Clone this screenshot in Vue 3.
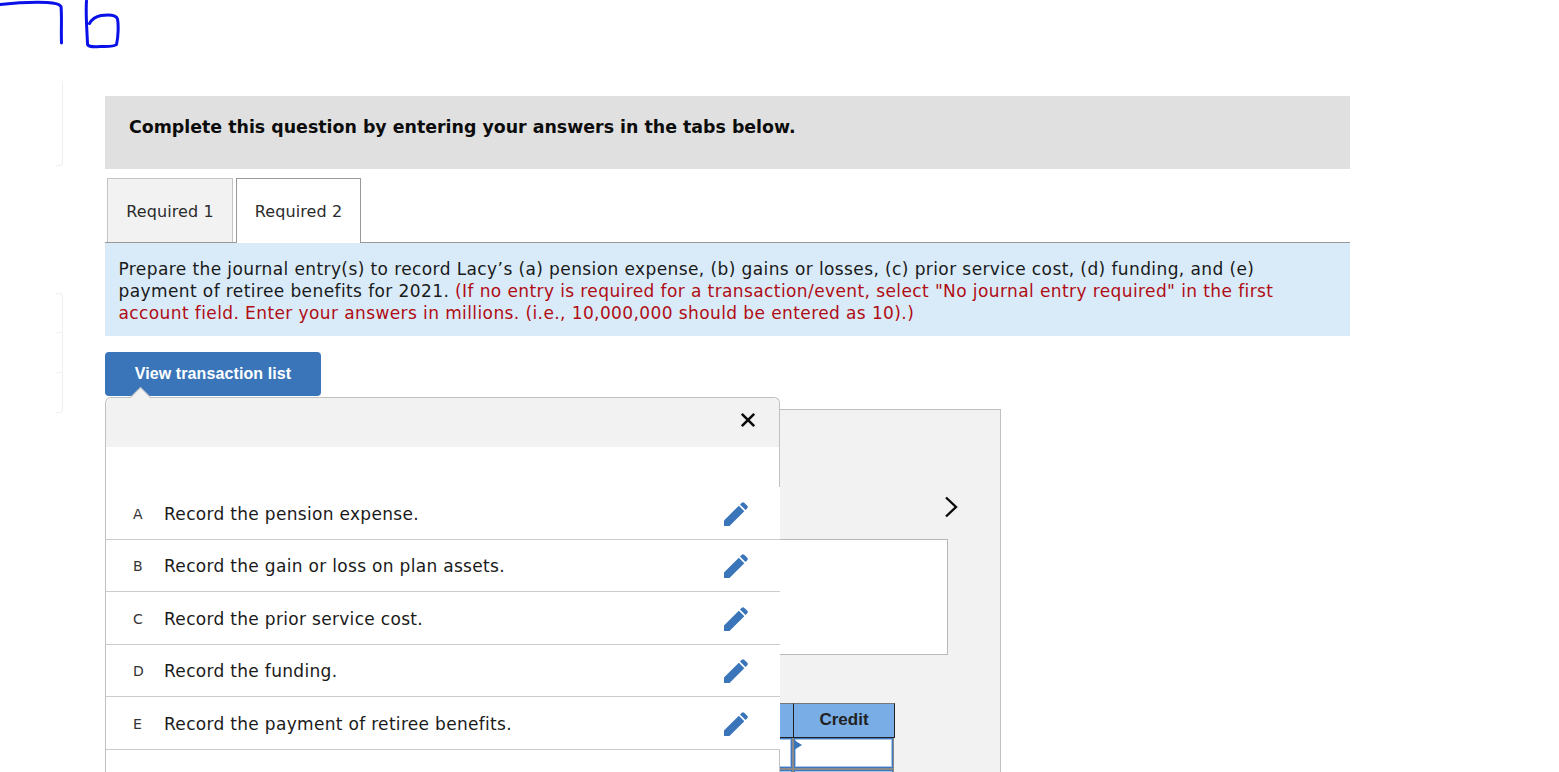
<script setup>
const rows = [
  { key: 'A', text: 'Record the pension expense.' },
  { key: 'B', text: 'Record the gain or loss on plan assets.' },
  { key: 'C', text: 'Record the prior service cost.' },
  { key: 'D', text: 'Record the funding.' },
  { key: 'E', text: 'Record the payment of retiree benefits.' },
]
</script>

<template>
  <div class="page">
    <svg class="ink" width="130" height="50" viewBox="0 0 130 50" fill="none">
      <path d="M0 4.500C14 3 32 2 47 2.500C54 2.800 59 3.500 61 6.500C62 16 61 30 61.500 43" />
      <path d="M86.500 1C85.500 14 87 30 87.500 44C88 47 92 47 100 46.500C108 46.500 114 47 116.500 44.500C118.500 36 118.500 24 117.500 19C116 14.500 108 14.500 101 15.500C96 16.500 92 19 89.500 23.500" />
    </svg>
    <div class="ghost ghost-a"></div>
    <div class="ghost ghost-b"></div>

    <main class="content">
      <div class="banner">Complete this question by entering your answers in the tabs below.</div>

      <div class="tabs">
        <div class="tab">Required 1</div>
        <div class="tab active">Required 2</div>
      </div>

      <div class="instructions">
        Prepare the journal entry(s) to record Lacy’s (a) pension expense, (b) gains or losses, (c) prior service cost, (d) funding, and (e) payment of retiree benefits for 2021.
        <span class="red">(If no entry is required for a transaction/event, select "No journal entry required" in the first account field. Enter your answers in millions. (i.e., 10,000,000 should be entered as 10).)</span>
      </div>

      <button class="list-btn">View transaction list</button>

      <div class="workspace">
        <section class="panel">
          <svg class="chevron" width="14" height="22" viewBox="0 0 14 22" fill="none">
            <path d="M2 1.500L12 11L2 20.500" />
          </svg>
          <div class="entry-box"></div>
          <div class="grid">
            <div class="head-cell"></div>
            <div class="head-cell">Credit</div>
            <div class="grid-cell"><span class="flag"></span></div>
            <div class="grid-cell"><span class="flag"></span></div>
            <div class="grid-cell"><span class="flag"></span></div>
            <div class="grid-cell"><span class="flag"></span></div>
          </div>
        </section>

        <aside class="popover">
          <span class="caret"></span>
          <header class="pop-head">
            <svg class="close" width="16" height="16" viewBox="0 0 16 16" fill="none">
              <path d="M1.800 1.800L14.200 14.200M14.200 1.800L1.800 14.200" />
            </svg>
          </header>
          <div class="pop-gap"></div>
          <ul class="pop-list">
            <li v-for="row in rows" :key="row.key" class="pop-row">
              <span class="row-key">{{ row.key }}</span>
              <span class="row-text">{{ row.text }}</span>
              <svg class="pencil" width="24" height="24" viewBox="0 0 24 24">
                <path d="M0 24V18.500L14.800 3.700L20.300 9.200L5.500 24Z" />
                <path d="M16 2.500L17.800 0.700C18.500 0 19.500 0 20.200 0.700L23.300 3.800C24 4.500 24 5.500 23.300 6.200L21.500 8Z" />
              </svg>
            </li>
          </ul>
        </aside>
      </div>
    </main>
  </div>
</template>

<style>
html, body { margin: 0; overflow: hidden; background: #fff; }
</style>

<style scoped>
.page {
  position: relative;
  height: 772px;
  overflow: hidden;
  font-family: "DejaVu Sans", Verdana, sans-serif;
  color: #1a1a1a;
  background: #fff;
}
.ink { position: absolute; left: 0; top: 0; }
.ink path { stroke: #0a10e8; stroke-width: 3; stroke-linecap: round; stroke-linejoin: round; }
.ghost { position: absolute; left: 56px; width: 6px; border: 1px solid #efefef; border-left: 0; border-radius: 0 4px 4px 0; }
.ghost-a { top: 80px; height: 85px; border-top: 0; }
.ghost-b { top: 293px; height: 118px; }
.ghost-b::before, .ghost-b::after {
  content: "";
  position: absolute;
  left: 0;
  width: 6px;
  height: 1px;
  background: #efefef;
}
.ghost-b::before { top: 38px; }
.ghost-b::after { top: 78px; }
.content { padding: 96px 0 0 105px; width: 1245px; }
.banner {
  height: 73px;
  line-height: 62px;
  padding-left: 24px;
  background: #e0e0e0;
  color: #0c0c0c;
  font-size: 17.400px;
  font-weight: 700;
  box-sizing: border-box;
}
.tabs {
  display: flex;
  gap: 3px;
  margin-top: 9px;
  padding-left: 2px;
  height: 65px;
  box-sizing: border-box;
  border-bottom: 1px solid #999;
}
.tab {
  width: 126px;
  height: 64px;
  box-sizing: border-box;
  border: 1px solid #c4c4c4;
  border-bottom: 0;
  background: #f2f2f2;
  font-size: 16px;
  letter-spacing: 0.100px;
  line-height: 65px;
  text-align: center;
  color: #2b2b2b;
}
.tab.active {
  width: 125px;
  height: 65px;
  border-color: #999;
  background: #fff;
  position: relative;
}
.instructions {
  height: 93px;
  box-sizing: border-box;
  padding: 15px 40px 0 13.500px;
  background: #d9ebf9;
  font-size: 17px;
  letter-spacing: 0.400px;
  line-height: 22px;
  color: #1a1a1a;
}
.red { color: #b00c14; }
.list-btn {
  display: block;
  margin-top: 16px;
  width: 216px;
  height: 44px;
  border: 0;
  border-radius: 4px;
  background: #3a75ba;
  color: #fff;
  font-family: "Liberation Sans", Arial, sans-serif;
  font-size: 16px;
  letter-spacing: 0.100px;
  font-weight: 700;
  padding: 0;
}
.workspace { position: relative; padding-top: 13px; }
.panel {
  position: relative;
  width: 896px;
  height: 420px;
  box-sizing: border-box;
  border: 1px solid #c0c0c0;
  background: #f2f2f2;
}
.chevron { position: absolute; left: 838px; top: 86px; }
.chevron path { stroke: #0c0c0c; stroke-width: 2.400; }
.entry-box {
  position: absolute;
  left: 0;
  top: 129px;
  width: 842px;
  height: 116px;
  box-sizing: border-box;
  border: 1px solid #b8b8b8;
  background: #fff;
}
.grid {
  position: absolute;
  left: 587px;
  top: 293px;
  display: grid;
  grid-template-columns: 101px 101px;
  grid-template-rows: 35px 32px 32px;
  width: 201px;
  background: #8a8a8a;
}
.head-cell {
  box-sizing: border-box;
  border-top: 1px solid #777;
  border-right: 1px solid #222;
  border-bottom: 1px solid #222;
  background: #78ade6;
  font-family: "Liberation Sans", Arial, sans-serif;
  font-size: 17px;
  font-weight: 700;
  line-height: 32px;
  text-align: center;
  color: #222;
}
.grid-cell {
  position: relative;
  box-sizing: border-box;
  margin: 0 2px 2px 0;
  border: 1px solid #3f78bd;
  box-shadow: inset 0 0 0 1px #a9c6ea;
  background: #fff;
}
.flag {
  position: absolute;
  left: -1px;
  top: 1px;
  border-left: 8px solid #3a75ba;
  border-top: 5px solid transparent;
  border-bottom: 5px solid transparent;
}
.popover {
  position: absolute;
  left: 0;
  top: 1px;
  width: 675px;
  height: 400px;
  box-sizing: border-box;
  background: #fff;
  border: 1px solid #c0c0c0;
  border-bottom: 0;
  border-radius: 6px 6px 0 0;
}
.caret {
  position: absolute;
  left: 27px;
  top: -8px;
  width: 14px;
  height: 14px;
  transform: rotate(45deg);
  background: #f2f2f2;
  border-left: 1px solid #c0c0c0;
  border-top: 1px solid #c0c0c0;
}
.pop-head {
  position: relative;
  height: 49px;
  background: #f2f2f2;
  border-radius: 6px 6px 0 0;
}
.close { position: absolute; left: 634px; top: 14px; }
.close path { stroke: #0c0c0c; stroke-width: 2.600; }
.pop-gap { height: 40px; }
.pop-list { list-style: none; margin: 0 -1px 0 0; padding: 0; background: #fff; position: relative; }
.pop-row {
  display: flex;
  align-items: center;
  height: 52.500px;
  padding-top: 2px;
  box-sizing: border-box;
  border-bottom: 1px solid #ccc;
}
.row-key {
  width: 58px;
  padding-left: 27px;
  box-sizing: border-box;
  font-size: 14px;
  color: #333;
}
.row-text { font-size: 17px; letter-spacing: 0.310px; color: #1a1a1a; flex: 1; }
.pencil { margin-right: 32px; fill: #3a75ba; }
</style>
